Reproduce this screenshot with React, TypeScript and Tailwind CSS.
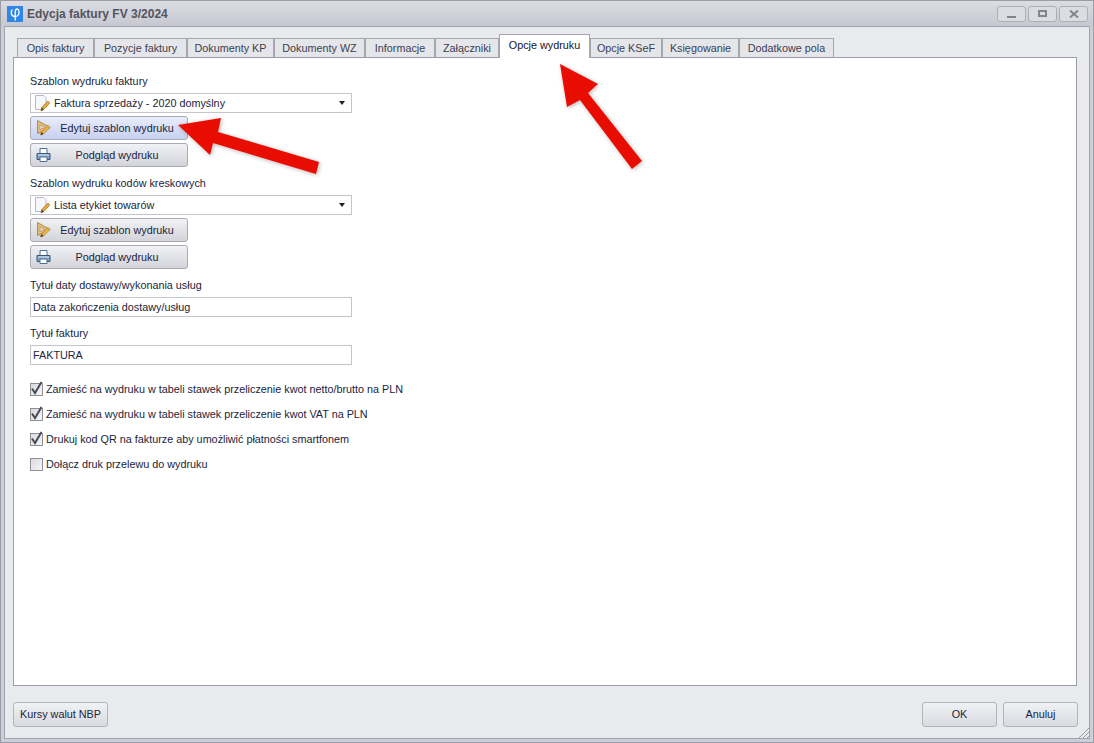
const tabs = [
  { label: "Opis faktury", w: "w-[77px]" },
  { label: "Pozycje faktury", w: "w-[93px]" },
  { label: "Dokumenty KP", w: "w-[87px]" },
  { label: "Dokumenty WZ", w: "w-[91px]" },
  { label: "Informacje", w: "w-[70px]" },
  { label: "Załączniki", w: "w-[64px]" },
  { label: "Opcje wydruku", w: "w-[91px]", active: true },
  { label: "Opcje KSeF", w: "w-[72px]" },
  { label: "Księgowanie", w: "w-[77px]" },
  { label: "Dodatkowe pola", w: "w-[95px]" },
];

const checks = [
  { label: "Zamieść na wydruku w tabeli stawek przeliczenie kwot netto/brutto na PLN", on: true },
  { label: "Zamieść na wydruku w tabeli stawek przeliczenie kwot VAT na PLN", on: true },
  { label: "Drukuj kod QR na fakturze aby umożliwić płatności smartfonem", on: true },
  { label: "Dołącz druk przelewu do wydruku", on: false },
];

function Logo() {
  return (
    <svg width="16" height="16" viewBox="0 0 16 16" className="shrink-0">
      <rect width="16" height="16" fill="#2f86e6" />
      <path
        d="M5.500 3.500C3.500 5 3.500 10.500 8 10.500C13 10.500 13 3 10 3C8.500 3 8.200 4.500 8.200 6.500V14.500"
        fill="none"
        stroke="#fff"
        strokeWidth="1.300"
      />
    </svg>
  );
}

function PageIcon() {
  return (
    <svg width="18" height="18" viewBox="0 0 18 18" className="shrink-0">
      <path d="M.5 1.500h8.500l2 2v7l-5 5h-5.500z" fill="#f6f7fb" stroke="#b4bccb" />
      <path d="M6 17l.8-3.500 6-6.500 2 2-6 6.500z" fill="#e8a93c" stroke="#a8741f" strokeWidth="0.7" />
      <path d="M6 17l.8-3.500 2 2z" fill="#4a3d2a" />
    </svg>
  );
}

function EditIcon() {
  return (
    <svg width="16" height="16" viewBox="0 0 16 16" className="shrink-0">
      <path d="M1.500 .5v13L14 7.500z" fill="#e6bd78" stroke="#b08a4a" />
      <path d="M4 5v4.500l4.500-2z" fill="#dfe4f6" stroke="#b08a4a" strokeWidth="0.6" />
      <path d="M4.500 15l1-3 6.500-6.500 2 2-6.500 6.500z" fill="#eeb644" stroke="#96702a" strokeWidth="0.6" />
      <path d="M4.500 15l1-3 2 2z" fill="#4a3d2a" />
    </svg>
  );
}

function PrintIcon() {
  return (
    <svg width="16" height="16" viewBox="0 0 16 16" className="shrink-0">
      <path d="M4 1.500h7v5H4z" fill="#fff" stroke="#4f7196" />
      <path d="M1 6.500h13v6H1z" fill="#7fa3c8" stroke="#35587c" />
      <path d="M4 10h7v4.500H4z" fill="#fff" stroke="#4f7196" />
      <path d="M2 8h11" stroke="#dce8f4" />
    </svg>
  );
}

function Select({ text }: { text: string }) {
  return (
    <div className="flex h-5 w-[322px] items-center border border-[#c4c5cc] bg-white pl-[4px] pr-[6px]">
      <PageIcon />
      <span className="ml-px flex-1">{text}</span>
      <span className="h-0 w-0 border-x-[3.5px] border-t-[4px] border-x-transparent border-t-[#20202a]" />
    </div>
  );
}

function IconButton({ icon, text, hot }: { icon: React.ReactNode; text: string; hot?: boolean }) {
  return (
    <div
      className={`relative flex h-6 w-[158px] items-center justify-center rounded-[3px] border border-[#a9aab3] ${
        hot ? "bg-gradient-to-b from-[#e9edfb] to-[#c6d0f0]" : "bg-gradient-to-b from-[#f1f2f5] to-[#d3d4da]"
      }`}
    >
      <span className="absolute left-[5px] top-[3px]">{icon}</span>
      <span className="pl-[16px]">{text}</span>
    </div>
  );
}

function Field({ text }: { text: string }) {
  return (
    <div className="flex h-5 w-[322px] items-center border border-[#c4c5cc] bg-white pl-[2px]">{text}</div>
  );
}

function Check({ label, on }: { label: string; on: boolean }) {
  return (
    <div className="flex h-[25px] items-center">
      <span className="flex h-[13px] w-[13px] shrink-0 items-center justify-center border border-[#8f9097] bg-gradient-to-br from-[#d9dae0] to-[#f7f7f9]">
        {on && (
          <svg width="15" height="15" viewBox="0 0 15 15" className="-mt-[3px] overflow-visible">
            <path d="M3 7.500l3 4.500 6.500-11" fill="none" stroke="#4a4c55" strokeWidth="2" />
          </svg>
        )}
      </span>
      <span className="ml-[3px]">{label}</span>
    </div>
  );
}

function FootButton({ text, w }: { text: string; w: string }) {
  return (
    <div className={`flex h-[25px] ${w} items-center justify-center rounded-[3px] border border-[#b3b4bc] bg-gradient-to-b from-[#f1f2f5] to-[#d9dae0]`}>
      {text}
    </div>
  );
}

export default function App() {
  return (
    <div className="relative flex h-[743px] w-[1094px] flex-col overflow-hidden border border-[#9c9ca8] bg-[#cdced6] font-['Liberation_Sans',sans-serif] text-[10.8px] text-[#20243c]">
      {/* title bar */}
      <div className="flex h-[25px] shrink-0 items-center bg-gradient-to-b from-[#dcdde3] to-[#c6c7d0] pl-[6px] pr-[5px]">
        <Logo />
        <span className="ml-[4px] flex-1 text-[12px] font-bold text-[#54545e]">Edycja faktury FV 3/2024</span>
        <div className="flex gap-[2px]">
          <div className="flex h-[16px] w-[29px] items-end justify-center rounded-[3px] border border-[#aeaeb8] bg-[#dcdde2] pb-[3px]">
            <span className="h-[2px] w-[9px] bg-[#84848e]" />
          </div>
          <div className="flex h-[16px] w-[29px] items-center justify-center rounded-[3px] border border-[#aeaeb8] bg-[#dcdde2]">
            <span className="h-[7px] w-[9px] border-2 border-[#84848e]" />
          </div>
          <div className="flex h-[16px] w-[29px] items-center justify-center rounded-[3px] border border-[#aeaeb8] bg-[#dcdde2]">
            <svg width="10" height="8" viewBox="0 0 10 8">
              <path d="M1 .5l8 7M9 .5l-8 7" stroke="#84848e" strokeWidth="2" />
            </svg>
          </div>
        </div>
      </div>

      <div className="mx-[3px] mb-[3px] flex min-h-0 flex-1 flex-col border border-[#a3a3ad] bg-[#e9eaee] pl-[8px] pr-[11px]">
        {/* tabs */}
        <div className="flex h-[30px] shrink-0 items-end pl-[4px]">
          {tabs.map((t) =>
            t.active ? (
              <div key={t.label} className={`relative z-10 -mb-px flex h-[24px] ${t.w} items-center justify-center border border-b-0 border-[#a5a6ae] bg-white pb-[2px] text-[#14142a]`}>
                {t.label}
              </div>
            ) : (
              <div key={t.label} className={`flex h-[19px] ${t.w} items-center justify-center border border-b-0 border-[#a5a6ae] bg-[#e5e6ea] text-[#3c4050]`}>
                {t.label}
              </div>
            ),
          )}
        </div>

        {/* page */}
        <div className="mr-px h-[629px] shrink-0 border border-[#9c9da6] bg-white pl-[16px] pt-[13px]">
          <div className="flex h-[20px] items-center">Szablon wydruku faktury</div>
          <div className="mt-[2px]"><Select text="Faktura sprzedaży - 2020 domyślny" /></div>
          <div className="mt-[3px]"><IconButton icon={<EditIcon />} text="Edytuj szablon wydruku" hot /></div>
          <div className="mt-[3px]"><IconButton icon={<PrintIcon />} text="Podgląd wydruku" /></div>

          <div className="mt-[6px] flex h-[20px] items-center">Szablon wydruku kodów kreskowych</div>
          <div className="mt-[2px]"><Select text="Lista etykiet towarów" /></div>
          <div className="mt-[3px]"><IconButton icon={<EditIcon />} text="Edytuj szablon wydruku" /></div>
          <div className="mt-[3px]"><IconButton icon={<PrintIcon />} text="Podgląd wydruku" /></div>

          <div className="mt-[6px] flex h-[20px] items-center">Tytuł daty dostawy/wykonania usług</div>
          <div className="mt-[2px]"><Field text="Data zakończenia dostawy/usług" /></div>
          <div className="mt-[6px] flex h-[20px] items-center">Tytuł faktury</div>
          <div className="mt-[2px]"><Field text="FAKTURA" /></div>

          <div className="mt-[12px]">
            {checks.map((c) => (
              <Check key={c.label} label={c.label} on={c.on} />
            ))}
          </div>
        </div>

        {/* footer */}
        <div className="mt-[16px] flex items-start">
          <FootButton text="Kursy walut NBP" w="w-[95px]" />
          <div className="flex-1" />
          <div className="flex gap-[6px]">
            <FootButton text="OK" w="w-[75px]" />
            <FootButton text="Anuluj" w="w-[75px]" />
          </div>
        </div>
      </div>

      {/* resize grip */}
      <svg width="14" height="14" viewBox="0 0 14 14" className="absolute bottom-[3px] right-[3px]">
        <path d="M13 3L3 13M13 7L7 13M13 11l-2 2" stroke="#9a9aa4" strokeWidth="1" />
      </svg>

      {/* red annotation arrows */}
      <svg width="1094" height="743" viewBox="0 0 1094 743" className="pointer-events-none absolute -left-px -top-px">
        <defs>
          <filter id="arrowShadow" x="-20%" y="-20%" width="140%" height="140%">
            <feDropShadow dx="1" dy="1" stdDeviation="2" floodColor="#000" floodOpacity="0.3" />
          </filter>
        </defs>
        <polygon points="178,125 221,118 218,132 319,162 316,174 213,143 210,155" fill="#e80a06" filter="url(#arrowShadow)" />
        <polygon points="560,64 598,84 588,93 642,161 632,169 580,100 567,107" fill="#e80a06" filter="url(#arrowShadow)" />
      </svg>
    </div>
  );
}
